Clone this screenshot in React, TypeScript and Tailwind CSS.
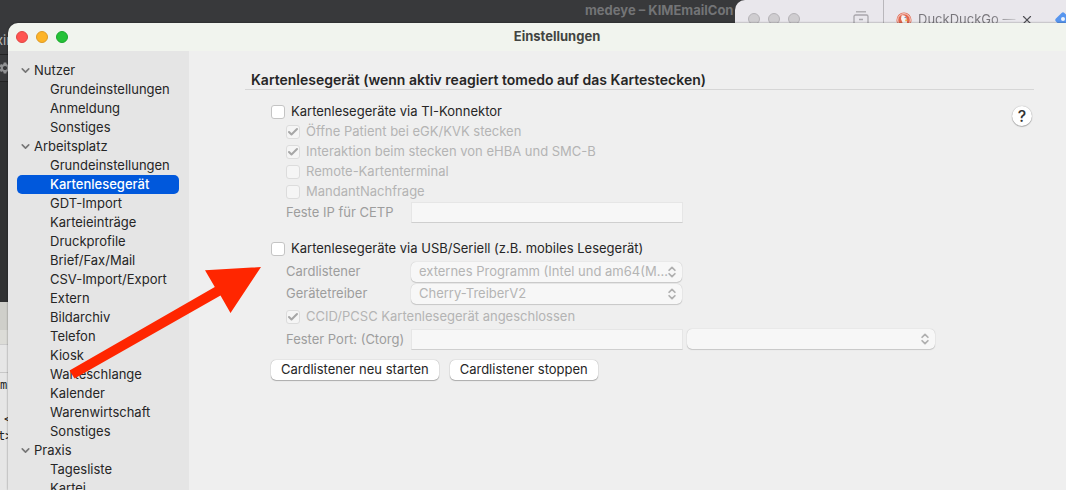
import { Check, ChevronDown, ChevronsUpDown, X } from "lucide-react";
import { MdSettings } from "react-icons/md";
import type { ReactNode } from "react";

const tree = [
    { title: "Nutzer", items: ["Grundeinstellungen", "Anmeldung", "Sonstiges"] },
    {
        title: "Arbeitsplatz",
        items: [
            "Grundeinstellungen",
            "Kartenlesegerät",
            "GDT-Import",
            "Karteieinträge",
            "Druckprofile",
            "Brief/Fax/Mail",
            "CSV-Import/Export",
            "Extern",
            "Bildarchiv",
            "Telefon",
            "Kiosk",
            "Warteschlange",
            "Kalender",
            "Warenwirtschaft",
            "Sonstiges",
        ],
    },
    { title: "Praxis", items: ["Tagesliste", "Kartei"] },
];

function CheckRow({ id, label, checked, disabled }: { id: string; label: string; checked?: boolean; disabled?: boolean }) {
    return (
        <div className={disabled ? "flex h-5 items-center gap-1.5 text-[#b4b4b4]" : "flex h-5 items-center gap-1.5"}>
            <span className="relative flex size-3.5">
                <input
                    id={id}
                    type="checkbox"
                    defaultChecked={checked}
                    disabled={disabled}
                    className="peer size-3.5 appearance-none rounded-[3px] border border-[#c4c4c4] bg-white disabled:border-[#dcdcdc] disabled:bg-[#f5f5f5]"
                />
                <Check
                    className="pointer-events-none absolute inset-0 hidden size-3.5 p-px text-[#a6a6a6] peer-checked:block"
                    strokeWidth={4}
                />
            </span>
            <label htmlFor={id}>{label}</label>
        </div>
    );
}

function Popup({ id, value, label }: { id: string; value: string; label?: string }) {
    return (
        <div className="relative flex-1">
            <select
                id={id}
                aria-label={label}
                disabled
                className="block h-5 w-full appearance-none truncate rounded-[5px] bg-[#f7f7f7] pr-3.5 pl-2 text-[#b4b4b4] opacity-100 shadow-[0_0_1px_#00000040,0_1px_1px_#00000026]"
            >
                <option>{value}</option>
            </select>
            <ChevronsUpDown
                className="pointer-events-none absolute top-[3px] right-[3px] size-3.5 text-[#b0b0b0]"
                strokeWidth={3}
            />
        </div>
    );
}

function Field({ id, label, children }: { id: string; label: string; children: ReactNode }) {
    return (
        <div className="flex min-h-[21px] items-center">
            <label htmlFor={id} className="w-[125px] text-[#9d9d9d]">
                {label}
            </label>
            {children}
        </div>
    );
}

const textField = "h-[21px] w-[272px] border border-[#e6e6e6] border-b-[#cfcfcf] bg-[#f7f7f7] px-1";
const pushButton =
    "h-5 rounded-[5px] bg-white px-2.5 shadow-[0_0_1px_#00000066,0_1px_1px_#00000040]";

function Sidebar() {
    return (
        <nav className="w-[181px] shrink-0 bg-[#e5e5e5] pt-2.5 leading-[19px] text-[#262626]">
            {tree.map((group) => (
                <div key={group.title}>
                    <button type="button" className="flex items-center gap-0.5 pl-[11px]">
                        <ChevronDown className="size-[13px] text-[#777]" strokeWidth={3} />
                        {group.title}
                    </button>
                    <ul className="pr-2.5 pl-[9px]">
                        {group.items.map((item) => (
                            <li key={item}>
                                <a
                                    href="#"
                                    className={
                                        item === "Kartenlesegerät"
                                            ? "block rounded-[5px] bg-[#0058dc] pl-[33px] font-medium text-white"
                                            : "block pl-[33px]"
                                    }
                                >
                                    {item}
                                </a>
                            </li>
                        ))}
                    </ul>
                </div>
            ))}
        </nav>
    );
}

function SettingsPane() {
    return (
        <main className="min-w-0 flex-1 bg-[#efefef] pt-5 pr-8 pl-14">
            <h2 className="border-b border-[#d6d6d6] pl-1.5 text-sm leading-[18px] font-semibold text-[#262626]">
                Kartenlesegerät (wenn aktiv reagiert tomedo auf das Kartestecken)
            </h2>

            <div className="flex items-start justify-between pt-3 pl-[26px]">
                <form className="w-[664px] text-[#262626]">
                    <CheckRow id="ti" label="Kartenlesegeräte via TI-Konnektor" />
                    <div className="pl-[15px]">
                        <CheckRow id="egk" label="Öffne Patient bei eGK/KVK stecken" checked disabled />
                        <CheckRow id="ehba" label="Interaktion beim stecken von eHBA und SMC-B" checked disabled />
                        <CheckRow id="remote" label="Remote-Kartenterminal" disabled />
                        <CheckRow id="mandant" label="MandantNachfrage" disabled />
                        <Field id="cetp" label="Feste IP für CETP">
                            <input id="cetp" disabled className={textField} />
                        </Field>
                    </div>

                    <div className="pt-4">
                        <CheckRow id="usb" label="Kartenlesegeräte via USB/Seriell (z.B. mobiles Lesegerät)" />
                    </div>
                    <div className="flex flex-col pt-0.5 pl-[15px]">
                        <div className="flex w-[396px] flex-col gap-px">
                            <Field id="listener" label="Cardlistener">
                                <Popup id="listener" value="externes Programm (Intel und am64(M1) Macs)" />
                            </Field>
                            <Field id="treiber" label="Gerätetreiber">
                                <Popup id="treiber" value="Cherry-TreiberV2" />
                            </Field>
                        </div>
                        <div className="pt-[3px] pb-0.5">
                            <CheckRow id="ccid" label="CCID/PCSC Kartenlesegerät angeschlossen" checked disabled />
                        </div>
                        <Field id="port" label="Fester Port: (Ctorg)">
                            <input id="port" disabled className={textField} />
                            <div className="flex flex-1 self-start pl-1">
                                <Popup id="portliste" label="Port" value="" />
                            </div>
                        </Field>
                    </div>

                    <div className="flex gap-[11px] pt-2.5">
                        <button type="button" className={pushButton}>
                            Cardlistener neu starten
                        </button>
                        <button type="button" className={pushButton}>
                            Cardlistener stoppen
                        </button>
                    </div>
                </form>
                <button
                    type="button"
                    aria-label="Hilfe"
                    className="mt-1 mr-0.5 size-5 rounded-full bg-white text-base leading-5 font-medium text-[#333] shadow-[0_0_1px_#00000066,0_1px_1px_#00000040]"
                >
                    ?
                </button>
            </div>
        </main>
    );
}

function BrowserTabs() {
    return (
        <div className="absolute top-0 right-0 flex h-[23px] w-[331px] items-start overflow-hidden rounded-tl-[10px] bg-[#e9e7ec]">
            <div className="flex h-full w-[149px] shrink-0 items-start border-r border-[#b9b7bb] pt-[13px] pl-[13px]">
                <span className="mr-2 size-3 shrink-0 rounded-full border border-[#b5b3b7] bg-[#cfcdd0]" />
                <span className="mr-2 size-3 shrink-0 rounded-full border border-[#b5b3b7] bg-[#cfcdd0]" />
                <span className="size-3 shrink-0 rounded-full border border-[#b5b3b7] bg-[#cfcdd0]" />
                <svg className="-mt-0.5 ml-[53px] shrink-0" width="16" height="16" fill="none" stroke="#a9a7ac">
                    <path d="M3 .8h10" strokeWidth="1.3" />
                    <path d="M2.500 4h11a1.500 1.500 0 0 1 1.500 1.500V13a2 2 0 0 1-2 2H3a2 2 0 0 1-2-2V5.500A1.500 1.500 0 0 1 2.500 4zM6 8.500h4" strokeWidth="1.3" />
                </svg>
            </div>
            <div className="flex h-10 items-center gap-1.5 pl-3">
                <svg className="shrink-0" width="16" height="16" viewBox="0 0 16 16">
                    <circle cx="8" cy="8" r="7.500" fill="#e2674f" />
                    <circle cx="8" cy="8" r="6.300" fill="none" stroke="#f5e9e7" strokeWidth="0.9" />
                    <path d="M5.500 3.500C8 2.500 10.500 4 10.500 7l.8 6.500-3.500.4L5 7z" fill="#f6f3f3" />
                    <path d="M9 7.500l3 .5-2.500 1.500z" fill="#eeb13f" />
                    <circle cx="9.200" cy="5.500" r=".7" fill="#5b78a8" />
                </svg>
                <span className="w-[98px] shrink-0 overflow-hidden bg-linear-to-r from-[#77757a] from-75% to-[#d0ced3] bg-clip-text whitespace-nowrap text-transparent">
                    DuckDuckGo — Pri
                </span>
                <X className="-ml-0.5 size-3.5 shrink-0 text-[#505055]" strokeWidth={2} />
                <svg className="ml-[13px] shrink-0" width="20" height="20" viewBox="0 0 20 20">
                    <rect x="4" y="4" width="12" height="12" rx="2" transform="rotate(45 10 10)" fill="#5795ee" />
                    <circle cx="10" cy="9" r="2" fill="#eef3fb" />
                </svg>
            </div>
        </div>
    );
}

/* Windows behind the settings window, only their edges are visible */
function Desktop() {
    return (
        <div className="absolute inset-0 bg-[#e6e6e6]" aria-hidden="true">
            <div className="h-[302px] overflow-hidden bg-[#303132]">
                <div className="h-[23px] bg-[#38393b]" />
                <div className="h-8 border-b border-[#222] bg-[#38393b] pt-2 -indent-1 text-[#b9b9b9]">xin</div>
                <div className="h-[27px] border-b border-[#222] bg-[#38393b] pt-1.5">
                    <MdSettings className="-ml-0.5 size-3.5 text-[#909193]" />
                </div>
            </div>
            <div className="h-7 bg-[#cfcfca]" />
            <div className="h-[15px] border-b border-[#cccccc] bg-[#dcdcd7]" />
            <div className="h-7 border-b border-[#c8c8c8]" />
            <div className="flex flex-col pt-1 font-['DejaVu_Sans_Mono',monospace] text-xs leading-[17px] text-[#222]">
                <span>m</span>
                <span className="pt-[17px] pl-1">&lt;</span>
                <span className="-indent-0.5">t&gt;</span>
            </div>
            <div className="absolute top-0 left-[585px] leading-[21px] font-bold text-[#737476]">
                medeye – KIMEmailCon
            </div>
            <BrowserTabs />
        </div>
    );
}

export default function App() {
    return (
        <div className="relative h-screen overflow-hidden pt-[23px] pl-2 font-[Inter,sans-serif] text-[13px]">
            <Desktop />
            <div className="relative flex h-full flex-col overflow-hidden rounded-tl-[10px] shadow-[0_0_2px_#00000080]">
                <header className="relative flex h-7 shrink-0 items-center justify-center bg-[#f1f4ee] pl-10">
                    <div className="absolute left-2 flex gap-2">
                        <button type="button" aria-label="Schließen" className="size-3 rounded-full border border-[#df4744] bg-[#ff5450]" />
                        <button type="button" aria-label="Minimieren" className="size-3 rounded-full border border-[#dd9a26] bg-[#fdb427]" />
                        <button type="button" aria-label="Maximieren" className="size-3 rounded-full border border-[#1ba62e] bg-[#25c238]" />
                    </div>
                    <h1 className="font-bold text-[#424441]">Einstellungen</h1>
                </header>
                <div className="flex min-h-0 flex-1">
                    <Sidebar />
                    <SettingsPane />
                </div>
            </div>

            {/* Annotation arrow */}
            <svg className="pointer-events-none absolute top-0 left-0" width="280" height="400">
                <path d="M261 267L205 270.300L214.800 287L69.500 370.500L74.500 378.500L220.500 295.500L230.500 313Z" fill="#ff2600" />
            </svg>
        </div>
    );
}
